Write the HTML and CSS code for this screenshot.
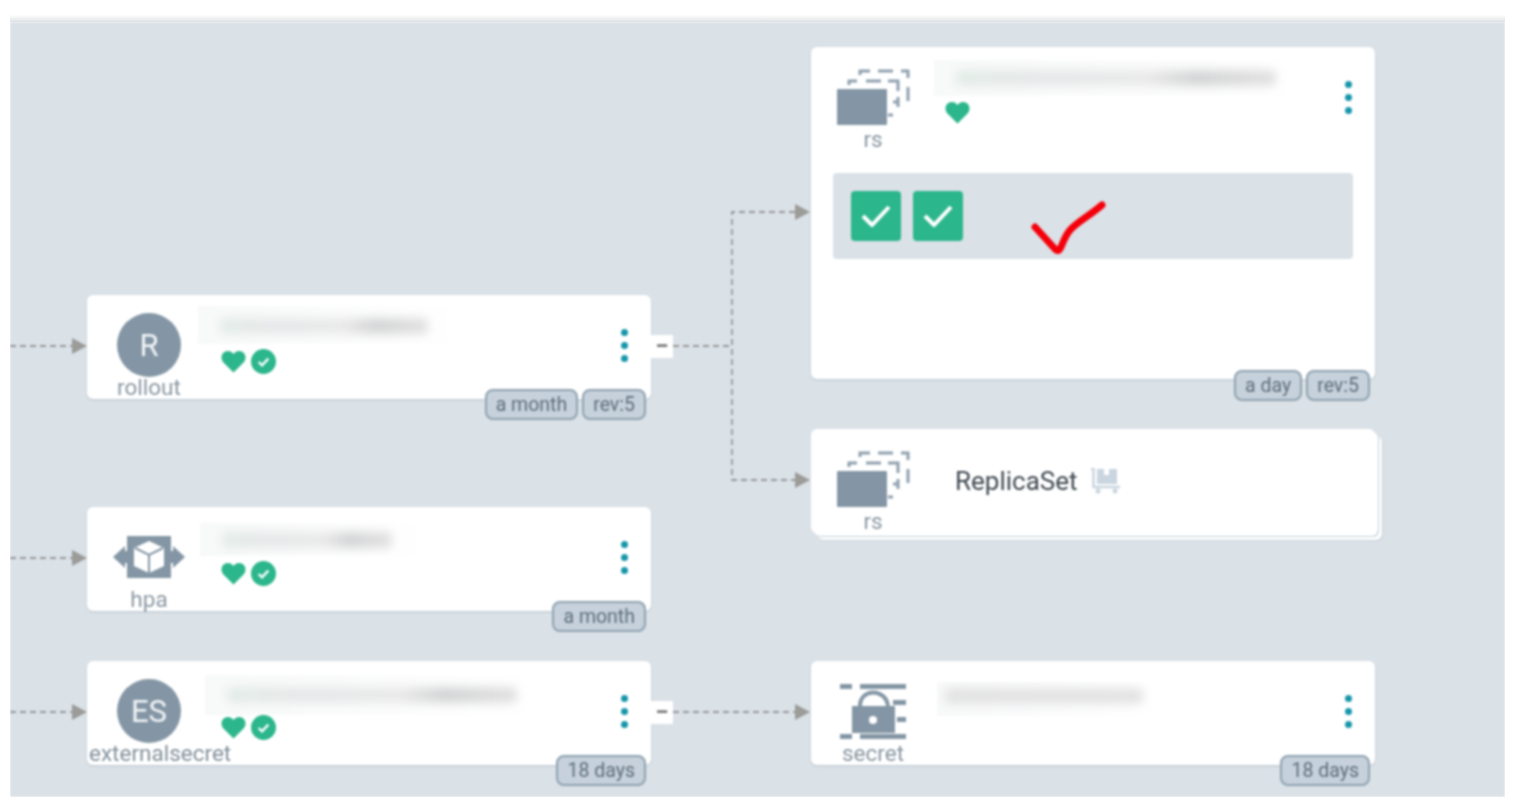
FILE: index.html
```html
<!DOCTYPE html>
<html lang="en">
<head>
    <meta charset="UTF-8">
    <title>Application tree</title>
    <link rel="stylesheet" href="styles.css">
</head>
<body>
    <div class="frame">
        <div class="top-strip"></div>
        <div class="canvas">

            <!-- Edges between nodes -->
            <svg class="edges" width="1494" height="775" viewBox="0 0 1494 775">
                <g class="edge-lines">
                    <path d="M0 324H62"/>
                    <path d="M0 536H62"/>
                    <path d="M0 690H62"/>
                    <path d="M663 324H722"/>
                    <path d="M785 190H722V458H785"/>
                    <path d="M663 690H785"/>
                </g>
                <g class="edge-arrows">
                    <path d="M62 316L77 324L62 332Z"/>
                    <path d="M62 528L77 536L62 544Z"/>
                    <path d="M62 682L77 690L62 698Z"/>
                    <path d="M785 182L800 190L785 198Z"/>
                    <path d="M785 450L800 458L785 466Z"/>
                    <path d="M785 682L800 690L785 698Z"/>
                </g>
            </svg>

            <!-- rollout -->
            <div class="node node-rollout">
                <div class="node-head">
                    <div class="kind">
                        <div class="kind-icon"><div class="kind-circle">R</div></div>
                        <div class="kind-label">rollout</div>
                    </div>
                    <div class="info">
                        <div class="name-row">
                            <div class="redacted redacted-rollout"><div class="smear smear-rollout"></div></div>
                        </div>
                        <div class="status">
                            <svg class="heart" viewBox="0 0 26 24"><path d="M13 23.500L2.500 13C-.800 9.500.200 4 3.500 2C7 0 10.800 1 13 4.200C15.200 1 19 0 22.500 2C25.800 4 26.800 9.500 23.500 13Z"/></svg>
                            <svg class="synced" viewBox="0 0 26 26"><circle cx="13" cy="13" r="13"/><path d="M8 13.500L11.500 17L18 10"/></svg>
                        </div>
                    </div>
                    <div class="kebab"><span></span><span></span><span></span></div>
                </div>
                <div class="collapse">&minus;</div>
                <div class="tags"><span class="tag">a month</span><span class="tag">rev:5</span></div>
            </div>

            <!-- hpa -->
            <div class="node node-hpa">
                <div class="node-head">
                    <div class="kind">
                        <div class="kind-icon">
                            <svg width="72" height="42" viewBox="0 0 72 42">
                                <path class="fill-slate" d="M14 0H58V42H14Z"/>
                                <path class="fill-slate" d="M12 10V15H15V27H12V32L0 21Z"/>
                                <path class="fill-slate" d="M60 10V15H57V27H60V32L72 21Z"/>
                                <path class="fill-white" d="M36 5L51 12V30L36 37L21 30V12Z"/>
                                <path class="cube-edge" d="M22 12L36 19L50 12M36 19V37"/>
                            </svg>
                        </div>
                        <div class="kind-label">hpa</div>
                    </div>
                    <div class="info">
                        <div class="name-row">
                            <div class="redacted redacted-hpa"><div class="smear smear-hpa"></div></div>
                        </div>
                        <div class="status">
                            <svg class="heart" viewBox="0 0 26 24"><path d="M13 23.500L2.500 13C-.800 9.500.200 4 3.500 2C7 0 10.800 1 13 4.200C15.200 1 19 0 22.500 2C25.800 4 26.800 9.500 23.500 13Z"/></svg>
                            <svg class="synced" viewBox="0 0 26 26"><circle cx="13" cy="13" r="13"/><path d="M8 13.500L11.500 17L18 10"/></svg>
                        </div>
                    </div>
                    <div class="kebab"><span></span><span></span><span></span></div>
                </div>
                <div class="tags"><span class="tag">a month</span></div>
            </div>

            <!-- externalsecret -->
            <div class="node node-external">
                <div class="node-head">
                    <div class="kind">
                        <div class="kind-icon"><div class="kind-circle">ES</div></div>
                        <div class="kind-label kind-label-long">externalsecret</div>
                    </div>
                    <div class="info">
                        <div class="name-row">
                            <div class="redacted redacted-external"><div class="smear smear-external"></div></div>
                        </div>
                        <div class="status">
                            <svg class="heart" viewBox="0 0 26 24"><path d="M13 23.500L2.500 13C-.800 9.500.200 4 3.500 2C7 0 10.800 1 13 4.200C15.200 1 19 0 22.500 2C25.800 4 26.800 9.500 23.500 13Z"/></svg>
                            <svg class="synced" viewBox="0 0 26 26"><circle cx="13" cy="13" r="13"/><path d="M8 13.500L11.500 17L18 10"/></svg>
                        </div>
                    </div>
                    <div class="kebab"><span></span><span></span><span></span></div>
                </div>
                <div class="collapse">&minus;</div>
                <div class="tags"><span class="tag">18 days</span></div>
            </div>

            <!-- rs with pods -->
            <div class="node node-rs">
                <div class="node-head">
                    <div class="kind">
                        <div class="kind-icon">
                            <svg width="73" height="56" viewBox="0 0 73 56">
                                <path class="dash-line" d="M23 6V2H33M41 2H56M64 2H71V9M71 18V32M12 16V12H20M29 12H44M51 12H61V22M61 28V38M61 33H56M56 46H51"/>
                                <rect class="fill-slate" x="0" y="20" width="50" height="36" rx="1"/>
                            </svg>
                        </div>
                        <div class="kind-label">rs</div>
                    </div>
                    <div class="info">
                        <div class="name-row">
                            <div class="redacted redacted-rs"><div class="smear smear-rs"></div></div>
                        </div>
                        <div class="status">
                            <svg class="heart" viewBox="0 0 26 24"><path d="M13 23.500L2.500 13C-.800 9.500.200 4 3.500 2C7 0 10.800 1 13 4.200C15.200 1 19 0 22.500 2C25.800 4 26.800 9.500 23.500 13Z"/></svg>
                        </div>
                    </div>
                    <div class="kebab"><span></span><span></span><span></span></div>
                </div>
                <div class="pods">
                    <div class="pod"><svg width="30" height="22" viewBox="0 0 30 22"><path d="M2 11L11 20L28 2"/></svg></div>
                    <div class="pod"><svg width="30" height="22" viewBox="0 0 30 22"><path d="M2 11L11 20L28 2"/></svg></div>
                </div>
                <svg class="scribble" width="78" height="58" viewBox="0 0 78 58">
                    <path d="M4 27L24 49C27 52 29 50 30 47C33 40 35 34 40 29C48 21 58 16 71 5"/>
                </svg>
                <div class="tags"><span class="tag">a day</span><span class="tag">rev:5</span></div>
            </div>

            <!-- collapsed replica sets -->
            <div class="node node-replica">
                <div class="node-head">
                    <div class="kind">
                        <div class="kind-icon">
                            <svg width="73" height="56" viewBox="0 0 73 56">
                                <path class="dash-line" d="M23 6V2H33M41 2H56M64 2H71V9M71 18V32M12 16V12H20M29 12H44M51 12H61V22M61 28V38M61 33H56M56 46H51"/>
                                <rect class="fill-slate" x="0" y="20" width="50" height="36" rx="1"/>
                            </svg>
                        </div>
                        <div class="kind-label">rs</div>
                    </div>
                    <div class="group-name">ReplicaSet</div>
                    <svg class="cart" width="31" height="26" viewBox="0 0 31 26">
                        <path class="cart-frame" d="M1 1H3.500V19H30"/>
                        <path class="cart-load" d="M7 1H14V7H19V1H27V16H7Z"/>
                        <circle class="cart-wheel" cx="8" cy="23" r="2.500"/>
                        <circle class="cart-wheel" cx="25" cy="23" r="2.500"/>
                    </svg>
                </div>
            </div>

            <!-- secret -->
            <div class="node node-secret">
                <div class="node-head">
                    <div class="kind">
                        <div class="kind-icon">
                            <svg width="66" height="55" viewBox="0 0 66 55">
                                <path class="fill-slate" d="M0 0H12V5H0ZM20 0H66V5H20ZM0 50H12V55H0ZM20 50H66V55H20ZM53 16H66V21H53ZM57 33H66V38H57ZM12 22H55V49H12Z"/>
                                <path class="shackle" d="M20 22C20 4 46 4 48 22"/>
                                <circle class="fill-white" cx="33" cy="36" r="4"/>
                            </svg>
                        </div>
                        <div class="kind-label">secret</div>
                    </div>
                    <div class="info">
                        <div class="name-row">
                            <div class="redacted redacted-secret"><div class="smear smear-secret"></div></div>
                        </div>
                    </div>
                    <div class="kebab"><span></span><span></span><span></span></div>
                </div>
                <div class="tags"><span class="tag">18 days</span></div>
            </div>

        </div>
    </div>
</body>
</html>
```

FILE: styles.css
```css
body {
    font-family: Roboto, "Liberation Sans", sans-serif;
    margin: 10px 9px 9px 10px;
    height: 787px;
    background-color: #fff;
    overflow: hidden;
}

.frame {
    display: flex;
    flex-direction: column;
    height: 100%;
    box-shadow: 0 0 10px rgba(0, 0, 0, 0.45);
}

.top-strip {
    height: 12px;
    background: linear-gradient(#fff 40%, #e0e2e4);
}

.canvas {
    position: relative;
    flex: 1;
    background-color: #dae1e7;
    filter: blur(0.8px);
}

/* Edges */
.edges {
    position: absolute;
    left: 0;
    top: 0;
}

.edge-lines path {
    fill: none;
    stroke: #808080;
    stroke-width: 1.3;
    stroke-dasharray: 6 4;
}

.edge-arrows path {
    fill: #9b9b98;
}

/* Nodes */
.node {
    position: absolute;
    width: 564px;
    height: 104px;
    background-color: #fff;
    border-radius: 6px;
    box-shadow: 0 1px 2px rgba(120, 135, 150, 0.3);
}

.node-rollout { left: 77px; top: 273px; }
.node-hpa { left: 77px; top: 485px; }
.node-external { left: 77px; top: 639px; }
.node-rs { left: 801px; top: 25px; height: 332px; }
.node-replica {
    left: 801px;
    top: 407px;
    box-shadow: 3px 3px 0 #fff, 4px 4px 0 #c4ced8, 7px 7px 0 #fff, 8px 8px 0 #c4ced8;
}
.node-secret { left: 801px; top: 639px; }

.node-head {
    display: flex;
    height: 104px;
}

.kind {
    display: flex;
    flex-direction: column;
    align-items: center;
    flex: none;
    width: 124px;
}

.kind-icon {
    display: flex;
    align-items: center;
    justify-content: center;
    height: 64px;
    padding-top: 18px;
}

.kind-circle {
    display: flex;
    align-items: center;
    justify-content: center;
    width: 64px;
    height: 64px;
    border-radius: 50%;
    background-color: #8496a5;
    color: #f1f4f6;
    font-size: 31px;
}

.kind-label {
    font-size: 22.5px;
    line-height: 21px;
    color: #8a97a2;
    white-space: nowrap;
}

.kind-label-long {
    align-self: flex-start;
    margin-left: 2px;
    color: #84919c;
}

.fill-slate { fill: #8496a5; }
.fill-white { fill: #fff; }

.cube-edge {
    fill: none;
    stroke: #8496a5;
    stroke-width: 2;
}

.dash-line {
    fill: none;
    stroke: #8fa1af;
    stroke-width: 3;
}

.shackle {
    fill: none;
    stroke: #8496a5;
    stroke-width: 4;
}

.info {
    margin-left: 10px;
}

.name-row {
    display: flex;
    align-items: flex-start;
    height: 54px;
}

/* Blurred out resource names */
.redacted {
    background: linear-gradient(90deg, #f8f9f9, #fff);
    overflow: hidden;
}

.redacted-rollout { width: 257px; height: 38px; margin: 11px 0 0 -23px; }
.redacted-hpa { width: 225px; height: 33px; margin: 16px 0 0 -21px; }
.redacted-external { width: 330px; height: 40px; margin: 14px 0 0 -16px; }
.redacted-rs { width: 366px; height: 36px; margin: 13px 0 0 -11px; }
.redacted-secret { width: 218px; height: 34px; margin: 21px 0 0 -8px; }

.smear {
    height: 16px;
    margin-top: 12px;
    margin-left: 22px;
    border-radius: 4px;
    filter: blur(5px);
    background: linear-gradient(90deg, #e2ece7 0, #e6e8e9 30%, #e9e9e9 60%, #d3d4d5 75%, #e2e2e2 100%);
}

.smear-rollout { width: 208px; }
.smear-hpa { width: 170px; margin-top: 9px; }
.smear-external { width: 290px; }
.smear-rs { width: 320px; margin-top: 10px; }
.smear-secret { width: 198px; margin-top: 6px; margin-left: 8px; background: #e3e3e4; }

.status {
    display: flex;
    align-items: center;
    gap: 5px;
}

.heart {
    width: 25px;
    height: 23px;
    fill: #2cb68b;
}

.synced {
    width: 25px;
    height: 25px;
}

.synced circle { fill: #2cb68b; }
.synced path {
    fill: none;
    stroke: #fff;
    stroke-width: 2.4;
}

.kebab {
    display: flex;
    flex-direction: column;
    gap: 6px;
    align-self: flex-start;
    margin-top: 34px;
    margin-left: auto;
    margin-right: 23.5px;
}

.kebab span {
    width: 7px;
    height: 7px;
    border-radius: 50%;
    background-color: #1796ab;
}

.collapse {
    position: absolute;
    left: 564px;
    top: 40px;
    width: 22px;
    height: 23px;
    background-color: #fff;
    color: #777;
    font-size: 24px;
    font-weight: 700;
    line-height: 23px;
    text-align: center;
}

.tags {
    position: absolute;
    right: 5px;
    bottom: -21px;
    display: flex;
    gap: 4px;
}

.node-rs .tags { bottom: -22px; }

.tag {
    height: 27px;
    padding: 0 9px;
    border: 2px solid #8fa2b0;
    border-radius: 8px;
    background-color: #c6d1db;
    color: #5f6f7b;
    font-size: 19.5px;
    line-height: 27px;
    white-space: nowrap;
}

/* Pods panel */
.pods {
    display: flex;
    gap: 12px;
    height: 50px;
    margin: 22px 22px 0;
    padding: 18px;
    background-color: #dae1e7;
    border-radius: 4px;
}

.pod {
    display: flex;
    align-items: center;
    justify-content: center;
    width: 50px;
    height: 50px;
    background-color: #2cb68b;
    border-radius: 4px;
}

.pod path {
    fill: none;
    stroke: #fff;
    stroke-width: 4;
}

/* Hand drawn tick on top of the panel */
.scribble {
    position: absolute;
    left: 220px;
    top: 153px;
}

.scribble path {
    fill: none;
    stroke: #f5000a;
    stroke-width: 7;
    stroke-linecap: round;
    stroke-linejoin: round;
}

.group-name {
    align-self: center;
    margin-left: 20px;
    font-size: 26px;
    color: #3f4952;
}

.cart {
    align-self: center;
    margin-left: 12px;
}

.cart-frame {
    fill: none;
    stroke: #c9d5df;
    stroke-width: 2.5;
}

.cart-load { fill: #c9d5df; }
.cart-wheel { fill: #c9d5df; }
```
